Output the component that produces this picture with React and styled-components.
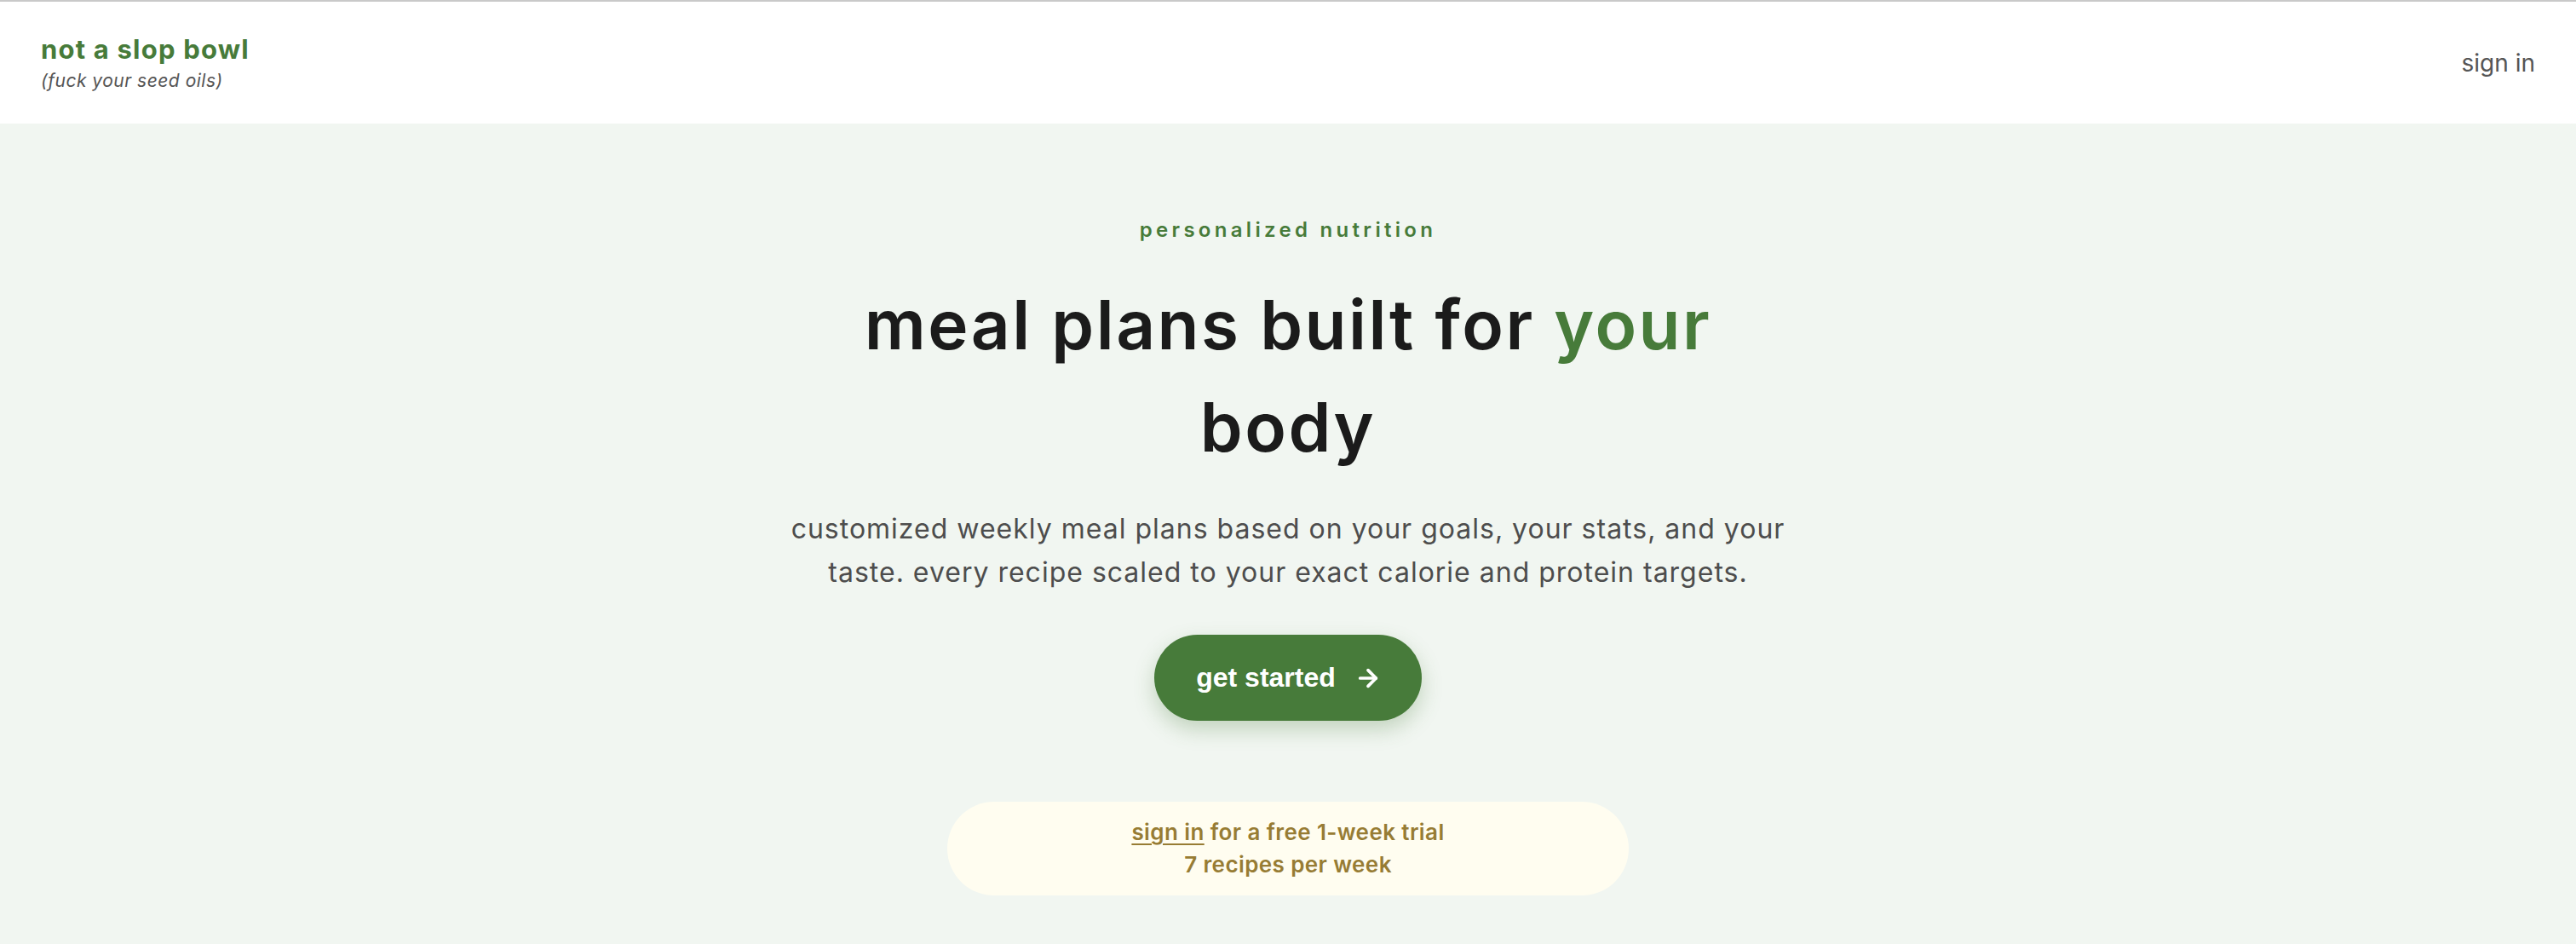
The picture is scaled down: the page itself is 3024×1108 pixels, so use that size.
import { createGlobalStyle, styled } from "styled-components"

const GlobalStyle = createGlobalStyle`
    html, body {
        margin: 0;
        padding: 0;
        background: #f1f6f1;
        font-family: Inter, "Noto Sans", sans-serif;
    }
    * {
        box-sizing: border-box;
    }
`

const colors = {
    green: "#477b3a",
    ink: "#1b1b1b",
    muted: "#555555",
    gold: "#977c34",
    cream: "#fffdf0",
}

const ArrowIcon = () => (
    <svg width="32" height="32" viewBox="0 0 24 24" fill="none" stroke="currentColor" strokeWidth="2.8" strokeLinecap="round" strokeLinejoin="round">
        <path d="M5 12h14" />
        <path d="m12 5 7 7-7 7" />
    </svg>
)

const App = () => {
    return <Page>
        <GlobalStyle />
        <Header>
            <Brand>
                <Logo>not a slop bowl</Logo>
                <Tagline>(fuck your seed oils)</Tagline>
            </Brand>
            <NavLink href="#">sign in</NavLink>
        </Header>
        <Hero>
            <Eyebrow>personalized nutrition</Eyebrow>
            <Title>
                meal plans built for <Accent>your</Accent> body
            </Title>
            <Lead>
                customized weekly meal plans based on your goals, your stats, and your taste. every recipe scaled to your exact calorie and protein targets.
            </Lead>
            <CtaButton>
                get started
                <ArrowIcon />
            </CtaButton>
            <TrialNote>
                <div><TrialLink href="#">sign in</TrialLink> for a free 1-week trial</div>
                <div>7 recipes per week</div>
            </TrialNote>
        </Hero>
    </Page>
}

export default App

const Page = styled.div`
    min-height: 100vh;
    display: flex;
    flex-direction: column;
`

const Header = styled.header`
    height: 145px;
    border-top: 2px solid #c9c9c9;
    background: #ffffff;
    padding: 0 48px;
    display: flex;
    justify-content: space-between;
    align-items: center;
`

const Brand = styled.div`
    display: flex;
    flex-direction: column;
    gap: 2px;
`

const Logo = styled.div`
    font-size: 31px;
    line-height: 1.3;
    font-weight: 700;
    letter-spacing: 1.2px;
    color: ${colors.green};
`

const Tagline = styled.div`
    font-size: 21px;
    line-height: 1.4;
    font-style: italic;
    letter-spacing: 0.5px;
    color: ${colors.muted};
`

const NavLink = styled.a`
    font-size: 28px;
    color: ${colors.muted};
    text-decoration: none;
`

const Hero = styled.main`
    display: flex;
    flex-direction: column;
    align-items: center;
    text-align: center;
    padding: 108px 24px 60px;
`

const Eyebrow = styled.div`
    font-size: 24px;
    line-height: 33px;
    font-weight: 600;
    letter-spacing: 4.3px;
    color: ${colors.green};
`

const Title = styled.h1`
    margin: 35px 0 0;
    max-width: 1100px;
    font-size: 80px;
    line-height: 120px;
    font-weight: 600;
    letter-spacing: 2.5px;
    color: ${colors.ink};
`

const Accent = styled.span`
    color: ${colors.green};
`

const Lead = styled.p`
    margin: 34px 0 0;
    max-width: 1200px;
    font-size: 32px;
    line-height: 51px;
    font-weight: 400;
    letter-spacing: 1px;
    color: #4d4d4d;
`

const CtaButton = styled.button`
    margin-top: 48px;
    display: flex;
    align-items: center;
    gap: 22px;
    padding: 32px 47px 32px 49px;
    border: none;
    border-radius: 999px;
    background: ${colors.green};
    color: #ffffff;
    font-family: "Liberation Sans", Arial, sans-serif;
    font-size: 32px;
    font-weight: 700;
    box-shadow: 0 10px 24px rgba(71, 123, 58, 0.28);
    cursor: pointer;
`

const TrialNote = styled.div`
    margin-top: 95px;
    width: 800px;
    padding: 17px 40px;
    border-radius: 999px;
    background: ${colors.cream};
    color: ${colors.gold};
    font-size: 26px;
    line-height: 38px;
    font-weight: 600;
    letter-spacing: 0.4px;
`

const TrialLink = styled.a`
    color: inherit;
    text-decoration: underline;
    text-decoration-thickness: 2px;
    text-underline-offset: 4px;
`
